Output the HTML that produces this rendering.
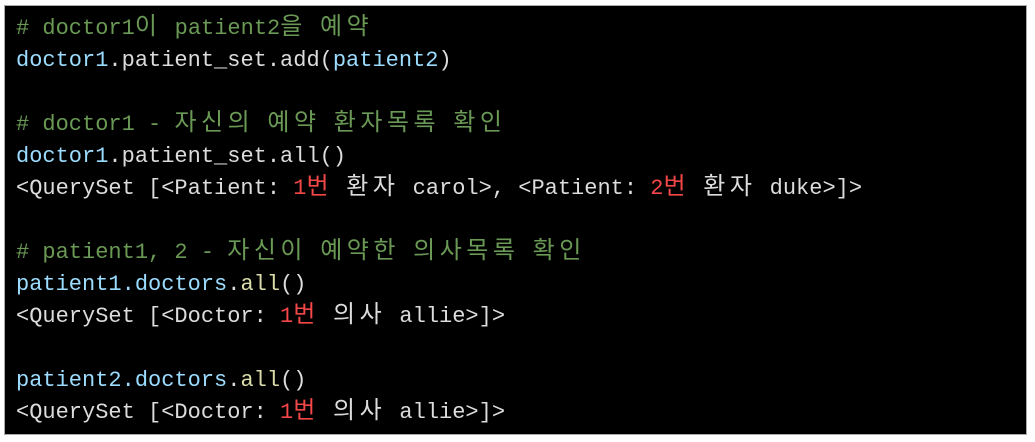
<!DOCTYPE html>
<html><head><meta charset="utf-8"><style>
html,body{margin:0;padding:0;background:#fff;width:1035px;height:442px;overflow:hidden}
.box{position:absolute;left:4px;top:5px;width:1023px;height:430px;background:#000;border:1px solid #aaa;box-sizing:border-box}
pre{position:absolute;left:11px;top:7px;margin:0;font-family:"Liberation Mono","Noto Sans CJK KR",monospace;font-size:22px;line-height:32px;color:#dcdcdc}
.c{color:#6a9955}.b{color:#9cdcfe}.y{color:#dcdcaa}.r{color:#f44747}
k{font-size:24px;letter-spacing:4.5px;line-height:1px}
</style></head><body><div class="box"><pre><span class="c"># doctor1<k>이</k> patient2<k>을</k> <k>예약</k></span>
<span class="b">doctor1</span>.patient_set.add(<span class="b">patient2</span>)

<span class="c"># doctor1 - <k>자신의</k> <k>예약</k> <k>환자목록</k> <k>확인</k></span>
<span class="b">doctor1</span>.patient_set.all()
&lt;QuerySet [&lt;Patient: <span class="r">1<k>번</k></span> <k>환자</k> carol&gt;, &lt;Patient: <span class="r">2<k>번</k></span> <k>환자</k> duke&gt;]&gt;

<span class="c"># patient1, 2 - <k>자신이</k> <k>예약한</k> <k>의사목록</k> <k>확인</k></span>
<span class="b">patient1.doctors</span>.<span class="y">all</span>()
&lt;QuerySet [&lt;Doctor: <span class="r">1<k>번</k></span> <k>의사</k> allie&gt;]&gt;

<span class="b">patient2.doctors</span>.<span class="y">all</span>()
&lt;QuerySet [&lt;Doctor: <span class="r">1<k>번</k></span> <k>의사</k> allie&gt;]&gt;</pre></div></body></html>
